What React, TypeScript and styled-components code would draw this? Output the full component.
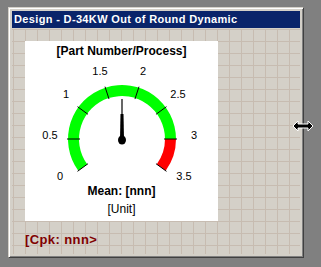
import React from "react";
import styled, { createGlobalStyle } from "styled-components";

const GlobalStyle = createGlobalStyle`
  html, body {
    margin: 0;
    padding: 0;
    background: #808080;
  }
  body {
    font-family: "Liberation Sans", Arial, sans-serif;
  }
`;

const Desk = styled.div`
  position: relative;
  width: 321px;
  height: 267px;
  padding: 7px 0 0 8px;
  box-sizing: border-box;
  background: #808080;
  overflow: hidden;
`;

const Window = styled.div`
  width: 296px;
  height: 251px;
  box-sizing: border-box;
  background: #d4d0c8;
  border-style: solid;
  border-width: 1px;
  border-color: #d4d0c8 #404040 #404040 #d4d0c8;
  box-shadow: inset 1px 1px 0 #ffffff, inset -1px -1px 0 #808080;
  padding: 3px;
  display: flex;
  flex-direction: column;
`;

const TitleBar = styled.div`
  height: 17px;
  background: #0a246a;
  color: #ffffff;
  font-family: "Liberation Sans", Arial, sans-serif;
  font-weight: bold;
  font-size: 11px;
  letter-spacing: 0.35px;
  line-height: 17px;
  padding-left: 2px;
  white-space: nowrap;
  overflow: hidden;
`;

const Canvas = styled.div`
  flex: 1;
  margin-top: 1px;
  padding: 12px 0 0 13px;
  background-color: #d4d0c8;
  background-image: linear-gradient(to right, #c7bcb1 1px, transparent 1px),
    linear-gradient(to bottom, #c7bcb1 1px, transparent 1px);
  background-size: 12px 12px;
  background-position: 1px 0;
  display: flex;
  flex-direction: column;
`;

const Panel = styled.div`
  width: 193px;
  height: 180px;
  background: #ffffff;
  display: flex;
  flex-direction: column;
  align-items: center;
  padding-top: 2px;
  box-sizing: border-box;
`;

const Heading = styled.div<{ $bold?: boolean; $gap?: number }>`
  font-size: 12px;
  line-height: ${(p) => (p.$bold ? "13px" : "14px")};
  margin-top: ${(p) => p.$gap ?? 0}px;
  font-weight: ${(p) => (p.$bold ? "bold" : "normal")};
  color: #000000;
  white-space: nowrap;
`;

const Title = styled(Heading)`
  line-height: 16px;
`;

const Cpk = styled.div`
  margin-top: 12px;
  color: #800000;
  font-weight: bold;
  font-size: 13px;
  line-height: 14px;
  letter-spacing: 0.4px;
`;

const Cursor = styled.svg`
  position: absolute;
  left: 292px;
  top: 120px;
`;

const CX = 97;
const CY = 80;
const R_IN = 43;
const R_OUT = 54;

const pt = (r: number, deg: number) => {
  const a = (deg * Math.PI) / 180;
  return [CX + r * Math.cos(a), CY - r * Math.sin(a)];
};

const band = (from: number, to: number) => {
  const [x1, y1] = pt(R_OUT, from);
  const [x2, y2] = pt(R_OUT, to);
  const [x3, y3] = pt(R_IN, to);
  const [x4, y4] = pt(R_IN, from);
  const large = from - to > 180 ? 1 : 0;
  return `M${x1} ${y1} A${R_OUT} ${R_OUT} 0 ${large} 1 ${x2} ${y2} L${x3} ${y3} A${R_IN} ${R_IN} 0 ${large} 0 ${x4} ${y4} Z`;
};

const valueAngle = (v: number) => 216 - v * 72;

// label centres relative to the pivot
const scale: { v: string; dx: number; dy: number }[] = [
  { v: "0", dx: -62, dy: 37 },
  { v: "0.5", dx: -72, dy: -4 },
  { v: "1", dx: -56, dy: -45 },
  { v: "1.5", dx: -22, dy: -68 },
  { v: "2", dx: 21, dy: -68 },
  { v: "2.5", dx: 56, dy: -45 },
  { v: "3", dx: 72, dy: -4 },
  { v: "3.5", dx: 62, dy: 37 },
];

function Gauge() {
  const needle = valueAngle(1.75);
  const [tx, ty] = pt(40, needle);
  return (
    <svg width="193" height="126" viewBox="0 0 193 126">
      <path d={band(216, 0)} fill="#00ff00" />
      <path d={band(0, -36)} fill="#ff0000" />
      {scale.map((s) => {
        const a = valueAngle(parseFloat(s.v));
        const [x1, y1] = pt(R_IN - 1, a);
        const [x2, y2] = pt(R_OUT + 1, a);
        return (
          <g key={s.v}>
            <line x1={x1} y1={y1} x2={x2} y2={y2} stroke="#000" strokeWidth="1" />
            <text
              x={CX + s.dx}
              y={CY + s.dy + 4}
              textAnchor="middle"
              fontSize="11"
              fill="#000000"
              fontFamily="'Liberation Sans', Arial, sans-serif"
            >
              {s.v}
            </text>
          </g>
        );
      })}
      <line x1={CX} y1={CY} x2={tx} y2={ty} stroke="#000" strokeWidth="1.2" />
      <polygon
        points={`${CX - 2},${CY} ${CX - 1.5},${CY - 25} ${CX + 1.5},${CY - 25} ${CX + 2},${CY}`}
        fill="#000"
      />
      <ellipse cx={CX} cy={CY + 1} rx="4" ry="4.5" fill="#000" />
    </svg>
  );
}

export default function App() {
  return (
    <>
      <GlobalStyle />
      <Desk>
        <Window>
          <TitleBar>Design - D-34KW Out of Round Dynamic</TitleBar>
          <Canvas>
            <Panel>
              <Title $bold>[Part Number/Process]</Title>
              <Gauge />
              <Heading $bold>Mean: [nnn]</Heading>
              <Heading $gap={4}>[Unit]</Heading>
            </Panel>
            <Cpk>[Cpk: nnn&gt;</Cpk>
          </Canvas>
        </Window>
        <Cursor width="22" height="12" viewBox="0 0 22 12">
          <path
            d="M1 6 L6 1 L6 4 L16 4 L16 1 L21 6 L16 11 L16 8 L6 8 L6 11 Z"
            fill="#000"
            stroke="#fff"
            strokeWidth="1"
          />
        </Cursor>
      </Desk>
    </>
  );
}
